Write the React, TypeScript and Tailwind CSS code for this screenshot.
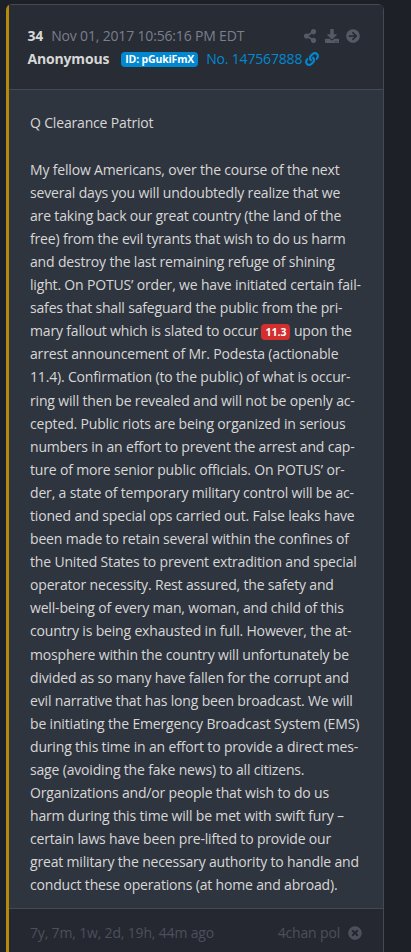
import { FaArrowCircleRight, FaDownload, FaLink, FaShareAlt, FaTimesCircle } from 'react-icons/fa';

// One entry per rendered line, words are hyphenated at the column edge
const lines = [
  'Q Clearance Patriot',
  '',
  'My fellow Americans, over the course of the next',
  'several days you will undoubtedly realize that we',
  'are taking back our great country (the land of the',
  'free) from the evil tyrants that wish to do us harm',
  'and destroy the last remaining refuge of shining',
  'light. On POTUS’ order, we have initiated certain fail-',
  'safes that shall safeguard the public from the pri-',
  'mary fallout which is slated to occur [11.3] upon the',
  'arrest announcement of Mr. Podesta (actionable',
  '11.4). Confirmation (to the public) of what is occur-',
  'ring will then be revealed and will not be openly ac-',
  'cepted. Public riots are being organized in serious',
  'numbers in an effort to prevent the arrest and cap-',
  'ture of more senior public officials. On POTUS’ or-',
  'der, a state of temporary military control will be ac-',
  'tioned and special ops carried out. False leaks have',
  'been made to retain several within the confines of',
  'the United States to prevent extradition and special',
  'operator necessity. Rest assured, the safety and',
  'well-being of every man, woman, and child of this',
  'country is being exhausted in full. However, the at-',
  'mosphere within the country will unfortunately be',
  'divided as so many have fallen for the corrupt and',
  'evil narrative that has long been broadcast. We will',
  'be initiating the Emergency Broadcast System (EMS)',
  'during this time in an effort to provide a direct mes-',
  'sage (avoiding the fake news) to all citizens.',
  'Organizations and/or people that wish to do us',
  'harm during this time will be met with swift fury –',
  'certain laws have been pre-lifted to provide our',
  'great military the necessary authority to handle and',
  'conduct these operations (at home and abroad).',
];

function Line({ text }: { text: string }) {
  // Bracketed markers are drawn as red badges
  const parts = text.split(/\[(.+?)\]/);

  return (
    <div className="h-[23.1px] whitespace-nowrap">
      {parts.map((part, i) =>
        i % 2 === 1 ? (
          <span key={i} className="inline-block rounded bg-[#d32f2f] px-1 text-[10.5px] leading-4 font-bold tracking-normal text-white">
            {part}
          </span>
        ) : (
          part
        )
      )}
    </div>
  );
}

function PostHeader() {
  return (
    <header className="h-[85px] border-b border-[#444952] bg-[#282c34] pt-[19px] pr-[23px] pl-[18.5px]">
      <div className="flex h-[23px] items-center">
        <span className="font-bold">34</span>
        <span className="ml-2 text-[#7a7f8e]">Nov 01, 2017 10:56:16 PM EDT</span>
        <div className="ml-auto flex items-center gap-[7.5px] text-[#555a66]">
          <FaShareAlt size={14} />
          <FaDownload size={14} />
          <FaArrowCircleRight size={14} />
        </div>
      </div>
      <div className="flex h-[23px] items-center">
        <span className="font-bold">Anonymous</span>
        <span className="mt-[2px] ml-[12px] rounded bg-[#0288d1] px-1 text-[10.5px] leading-[15px] font-bold text-white">ID: pGukiFmX</span>
        <span className="ml-2 text-[#0288d1]">No. 147567888</span>
        <FaLink size={14} className="ml-[3px] text-[#0288d1]" />
      </div>
    </header>
  );
}

export default function App() {
  return (
    <div className="h-[952px] overflow-hidden bg-[#1e2028] pt-1 pl-1.5 font-['Open_Sans','Noto_Sans',sans-serif] text-[14px] leading-[23.1px] tracking-[-0.17px] text-[#d7d7d7]">
      <article className="h-[960px] w-[378px] rounded-md border border-l-3 border-[#444952] border-l-[#b58a0c] bg-[#2f353f]">
        <PostHeader />
        <div className="h-[818px] pt-[21.4px] pl-[21px]">
          {lines.map((line, i) => (
            <Line key={i} text={line} />
          ))}
        </div>
        <footer className="flex h-[57px] items-start border-t border-[#444952] bg-[#252830] pt-[12px] pr-[21px] pl-[21px] text-[#4b505c]">
          <span>7y, 7m, 1w, 2d, 19h, 44m ago</span>
          <span className="ml-auto">4chan pol</span>
          <FaTimesCircle size={14} className="mt-[5px] ml-2" />
        </footer>
      </article>
    </div>
  );
}
